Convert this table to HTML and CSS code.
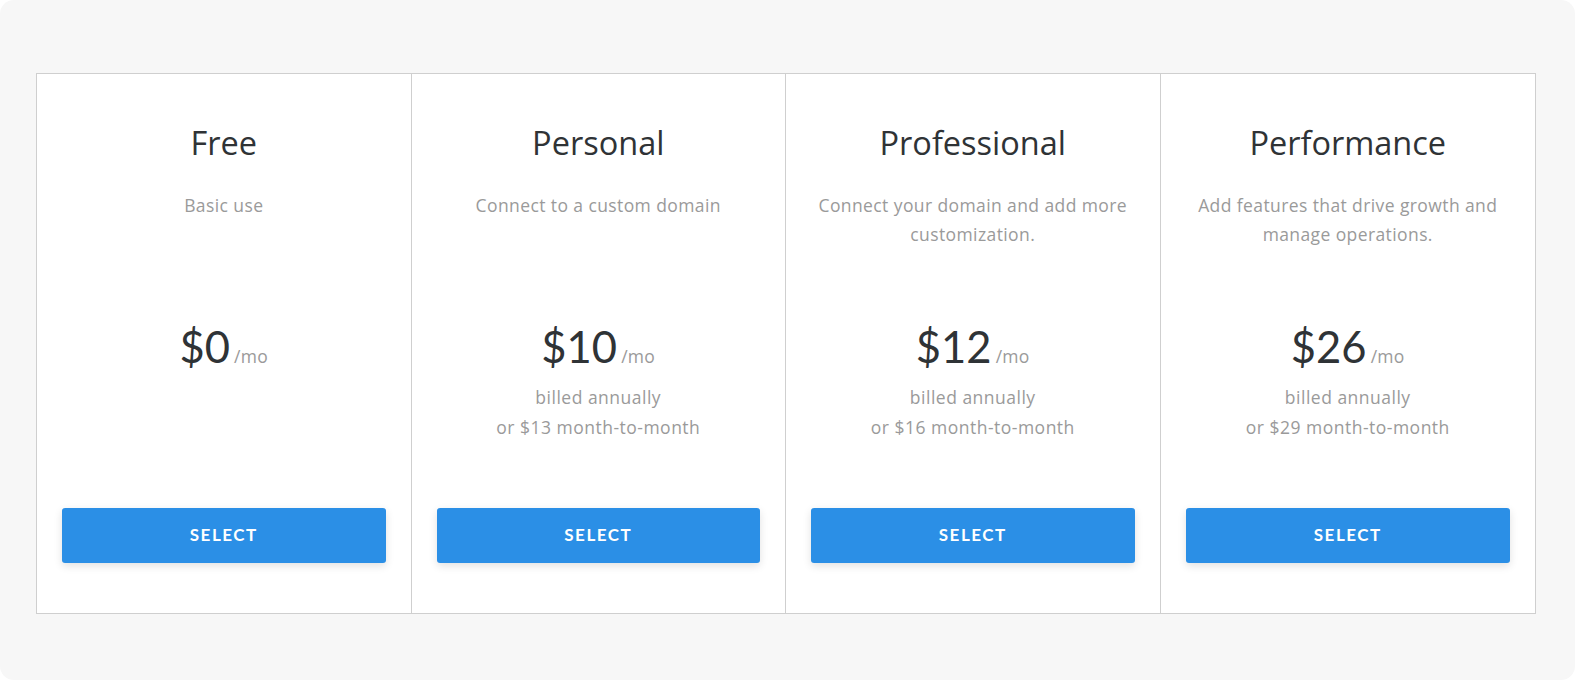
FILE: index.html
```html
<!DOCTYPE html>
<html lang="en">
<head>
<meta charset="utf-8">
<title>Pricing</title>
<link rel="stylesheet" href="styles.css">
</head>
<body>
<div class="page">
  <div class="plans">
    <div class="plan">
      <h2 class="plan-title">Free</h2>
      <p class="plan-desc">Basic use</p>
      <div class="plan-price"><span class="amount">$0</span> <span class="per">/mo</span></div>
      <div class="plan-billing"></div>
      <button class="select-btn">SELECT</button>
    </div>
    <div class="plan">
      <h2 class="plan-title">Personal</h2>
      <p class="plan-desc">Connect to a custom domain</p>
      <div class="plan-price"><span class="amount">$10</span> <span class="per">/mo</span></div>
      <div class="plan-billing">billed annually<br>or $13 month-to-month</div>
      <button class="select-btn">SELECT</button>
    </div>
    <div class="plan">
      <h2 class="plan-title">Professional</h2>
      <p class="plan-desc">Connect your domain and add more customization.</p>
      <div class="plan-price"><span class="amount">$12</span> <span class="per">/mo</span></div>
      <div class="plan-billing">billed annually<br>or $16 month-to-month</div>
      <button class="select-btn">SELECT</button>
    </div>
    <div class="plan">
      <h2 class="plan-title">Performance</h2>
      <p class="plan-desc">Add features that drive growth and manage operations.</p>
      <div class="plan-price"><span class="amount">$26</span> <span class="per">/mo</span></div>
      <div class="plan-billing">billed annually<br>or $29 month-to-month</div>
      <button class="select-btn">SELECT</button>
    </div>
  </div>
</div>
</body>
</html>
```
FILE: styles.css
```css
html, body {
  margin: 0;
  padding: 0;
  background: #ffffff;
}
.page {
  width: 1575px;
  height: 680px;
  box-sizing: border-box;
  background: #f7f7f7;
  border-radius: 14px;
  padding: 73px 0 0 36px;
}
.plans {
  width: 1500px;
  box-sizing: border-box;
  display: grid;
  grid-template-columns: repeat(4, 1fr);
  background: #ffffff;
  border: 1px solid #cfcfcf;
}
.plan {
  display: flex;
  flex-direction: column;
  align-items: stretch;
  padding: 49px 25px 50px;
  text-align: center;
  border-right: 1px solid #cfcfcf;
}
.plan:last-child {
  border-right: none;
}
.plan-title {
  margin: 0;
  height: 42px;
  line-height: 40px;
  font-family: "Open Sans", sans-serif;
  font-weight: 400;
  font-size: 32.5px;
  color: #2f3336;
}
.plan-desc {
  margin: 26px 0 0;
  height: 58px;
  padding: 0 4px;
  line-height: 29px;
  font-family: "Open Sans", sans-serif;
  font-size: 17.5px;
  letter-spacing: 0.4px;
  color: #9a9a9a;
}
.plan-price {
  margin-top: 72px;
  height: 50px;
  line-height: 50px;
  font-family: Lato, sans-serif;
  color: #2f3336;
}
.amount {
  font-size: 43.5px;
}
.per {
  font-family: "Open Sans", sans-serif;
  font-size: 17.5px;
  letter-spacing: 0.3px;
  color: #9a9a9a;
}
.plan-billing {
  margin-top: 11px;
  height: 60px;
  line-height: 30px;
  font-family: "Open Sans", sans-serif;
  font-size: 17.5px;
  letter-spacing: 0.5px;
  color: #9a9a9a;
}
.select-btn {
  margin-top: 66px;
  height: 55px;
  border: none;
  border-radius: 3px;
  background: #2b8fe6;
  color: #ffffff;
  font-family: Lato, sans-serif;
  font-weight: 700;
  font-size: 17px;
  letter-spacing: 1.5px;
  padding-top: 0;
  padding-bottom: 2px;
  box-shadow: 0 3px 8px rgba(0, 0, 0, 0.12);
  cursor: pointer;
}
```
